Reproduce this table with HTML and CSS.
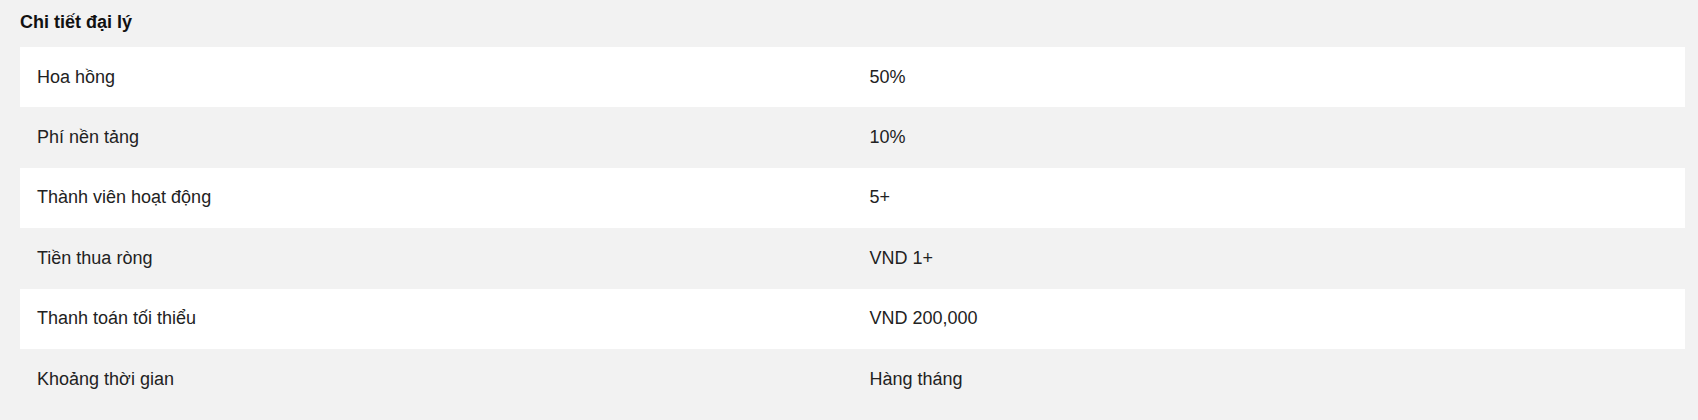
FILE: index.html
```html
<!DOCTYPE html>
<html lang="vi">
<head>
<meta charset="utf-8">
<title>Chi tiết đại lý</title>
<link rel="stylesheet" href="styles.css">
</head>
<body>
<section class="panel">
  <h3 class="panel-title">Chi tiết đại lý</h3>
  <div class="details">
    <div class="row"><div class="cell">Hoa hồng</div><div class="cell">50%</div></div>
    <div class="row"><div class="cell">Phí nền tảng</div><div class="cell">10%</div></div>
    <div class="row"><div class="cell">Thành viên hoạt động</div><div class="cell">5+</div></div>
    <div class="row"><div class="cell">Tiền thua ròng</div><div class="cell">VND 1+</div></div>
    <div class="row"><div class="cell">Thanh toán tối thiểu</div><div class="cell">VND 200,000</div></div>
    <div class="row"><div class="cell">Khoảng thời gian</div><div class="cell">Hàng tháng</div></div>
  </div>
</section>
</body>
</html>
```

FILE: styles.css
```css
html, body {
  margin: 0;
  padding: 0;
  background: #f2f2f2;
}

body {
  font-family: "Liberation Sans", Arial, sans-serif;
  color: #222;
}

.panel {
  padding: 12px 13px 0 20px;
}

.panel-title {
  margin: 0 0 15px 0;
  font-size: 18px;
  font-weight: bold;
  line-height: 20px;
  color: #111;
}

.details {
  display: flex;
  flex-direction: column;
}

.row {
  display: grid;
  grid-template-columns: 1fr 1fr;
  align-items: center;
  height: 60.4px;
  background: #f2f2f2;
}

.row:nth-child(odd) {
  background: #fff;
}

.cell {
  padding: 0 17px;
  font-size: 18px;
  line-height: 21px;
}
```
